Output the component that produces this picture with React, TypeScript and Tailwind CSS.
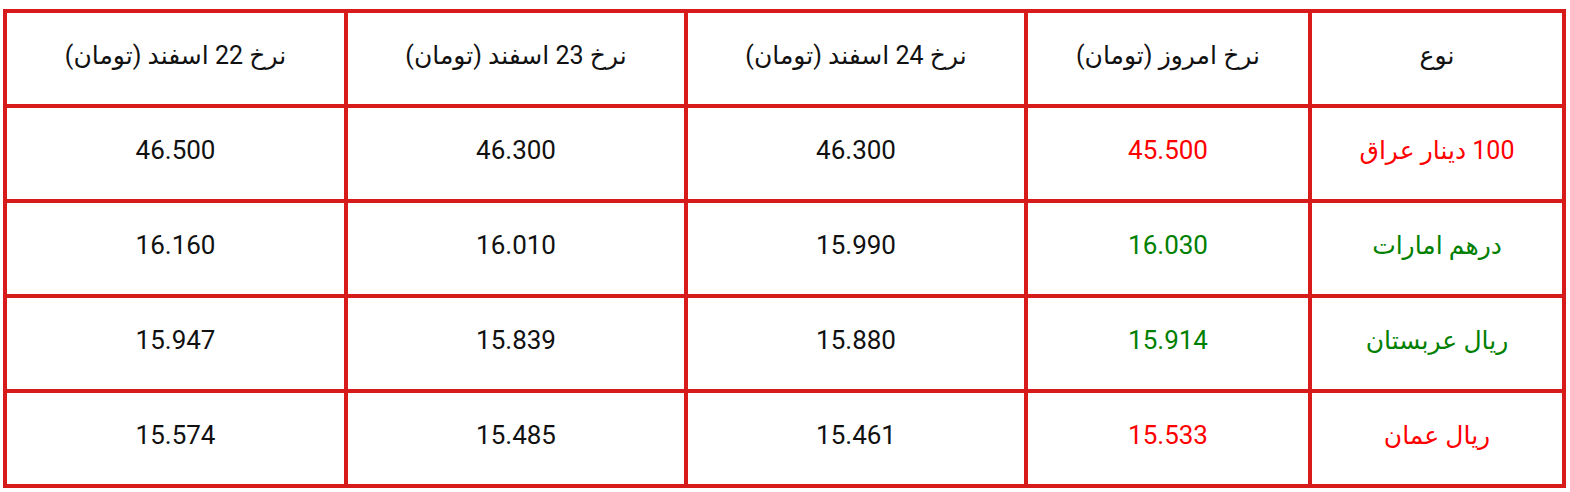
import React from "react";

const headers = ["نوع", "نرخ امروز (تومان)", "نرخ 24 اسفند (تومان)", "نرخ 23 اسفند (تومان)", "نرخ 22 اسفند (تومان)"];

type Row = { name: string; color: "red" | "green"; values: string[] };

const rows: Row[] = [
  { name: "100 دینار عراق", color: "red", values: ["45.500", "46.300", "46.300", "46.500"] },
  { name: "درهم امارات", color: "green", values: ["16.030", "15.990", "16.010", "16.160"] },
  { name: "ریال عربستان", color: "green", values: ["15.914", "15.880", "15.839", "15.947"] },
  { name: "ریال عمان", color: "red", values: ["15.533", "15.461", "15.485", "15.574"] },
];

const cell = "bg-white flex items-center justify-center h-[91px] pb-[6px]";

export default function App() {
  return (
    <div className="bg-white w-[1570px] h-[492px] pt-[9px] pl-[3px]" style={{ fontFamily: "Roboto, 'DejaVu Sans', sans-serif" }}>
      <div
        dir="rtl"
        className="grid w-[1563px] bg-[#d71b1b] p-[4px] gap-[4px] grid-cols-[250px_280px_336px_336px_337px] text-[26px] text-[#111]"
      >
        {headers.map((h) => (
          <div key={h} className={cell}>
            <span className="text-[25px]">{h}</span>
          </div>
        ))}
        {rows.map((r) => (
          <React.Fragment key={r.name}>
            <div className={cell}>
              <span className={`text-[25px] ${r.color === "red" ? "text-[#ff0000]" : "text-[#008000]"}`}>{r.name}</span>
            </div>
            {r.values.map((v, i) => (
              <div key={i} className={cell}>
                <span
                  className={
                    i === 0 ? (r.color === "red" ? "text-[#ff0000]" : "text-[#008000]") : ""
                  }
                >
                  {v}
                </span>
              </div>
            ))}
          </React.Fragment>
        ))}
      </div>
    </div>
  );
}
